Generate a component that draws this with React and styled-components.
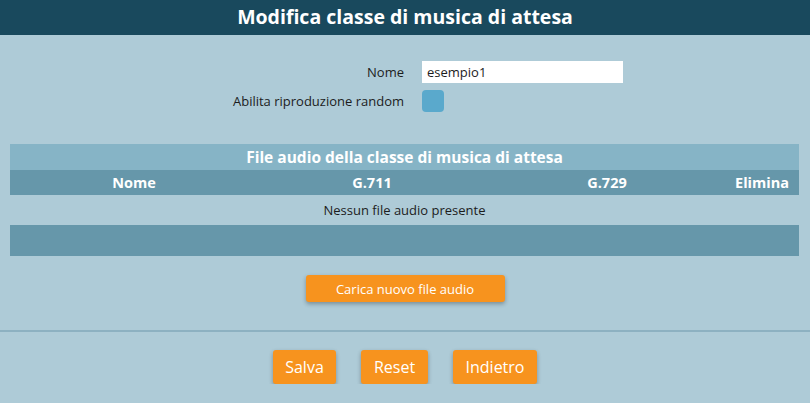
import React from 'react';
import styled, { createGlobalStyle } from 'styled-components';

const GlobalStyle = createGlobalStyle`
  body {
    margin: 0;
    background: #aecbd7;
    font-family: 'Open Sans', 'Noto Sans', sans-serif;
    color: #1c1c1c;
  }
  * { box-sizing: border-box; }
`;

const Header = styled.header`
  height: 35px;
  background: #19495d;
  color: #fff;
  font-size: 19.5px;
  font-weight: 700;
  text-align: center;
  line-height: 34px;
`;

const Form = styled.div`
  display: grid;
  grid-template-columns: 404px 1fr;
  column-gap: 18px;
  row-gap: 7px;
  padding-top: 26px;
  align-items: center;
`;

const Label = styled.label`
  text-align: right;
  font-size: 13px;
`;

const TextInput = styled.input`
  display: block;
  width: 201px;
  height: 22px;
  border: none;
  padding: 0 5px;
  font: inherit;
  font-size: 13px;
  color: #1c1c1c;
  outline: none;
`;

const Check = styled.span`
  display: block;
  width: 22px;
  height: 22px;
  border-radius: 4px;
  background: #5aa9cc;
`;

const Table = styled.div`
  margin: 32px 11px 0 10px;
`;

const Caption = styled.div`
  height: 26px;
  line-height: 26px;
  background: #86b4c6;
  color: #fff;
  font-weight: 700;
  font-size: 15.5px;
  text-align: center;
`;

const HeadRow = styled.div`
  display: grid;
  grid-template-columns: 248px 228px 242px 1fr;
  height: 25px;
  align-items: center;
  background: #6697aa;
  color: #fff;
  font-weight: 700;
  font-size: 14.5px;
`;

const HeadCell = styled.div`
  text-align: ${p => (p.$right ? 'right' : 'center')};
  padding-right: ${p => (p.$right ? '10px' : '0')};
`;

const EmptyRow = styled.div`
  height: 30px;
  line-height: 31px;
  text-align: center;
  font-size: 13px;
`;

const FootRow = styled.div`
  height: 31px;
  background: #6697aa;
`;

const Actions = styled.div`
  display: flex;
  justify-content: center;
  gap: ${p => p.$gap || 0}px;
  padding: ${p => p.$pad};
`;

const Button = styled.button`
  height: ${p => p.$h}px;
  width: ${p => p.$w}px;
  border: none;
  border-radius: 3px;
  background: #f7931e;
  color: #fff;
  font-family: inherit;
  font-size: ${p => p.$fs}px;
  box-shadow: 0 2px 4px rgba(0, 0, 0, 0.3);
  cursor: pointer;
  padding: 0;
`;

const Separator = styled.hr`
  margin: 0;
  border: none;
  border-top: 2px solid #8db1c1;
`;

export default function App() {
  return (
    <>
      <GlobalStyle />
      <Header>Modifica classe di musica di attesa</Header>
      <Form>
        <Label>Nome</Label>
        <div>
          <TextInput defaultValue="esempio1" />
        </div>
        <Label>Abilita riproduzione random</Label>
        <div>
          <Check />
        </div>
      </Form>
      <Table>
        <Caption>File audio della classe di musica di attesa</Caption>
        <HeadRow>
          <HeadCell>Nome</HeadCell>
          <HeadCell>G.711</HeadCell>
          <HeadCell>G.729</HeadCell>
          <HeadCell $right>Elimina</HeadCell>
        </HeadRow>
        <EmptyRow>Nessun file audio presente</EmptyRow>
        <FootRow />
      </Table>
      <Actions $pad="19px 0 28px">
        <Button $w={199} $h={27} $fs={13}>Carica nuovo file audio</Button>
      </Actions>
      <Separator />
      <Actions $pad="18px 0 0" $gap={25}>
        <Button $w={63} $h={34} $fs={16}>Salva</Button>
        <Button $w={67} $h={34} $fs={16}>Reset</Button>
        <Button $w={84} $h={34} $fs={16}>Indietro</Button>
      </Actions>
    </>
  );
}
